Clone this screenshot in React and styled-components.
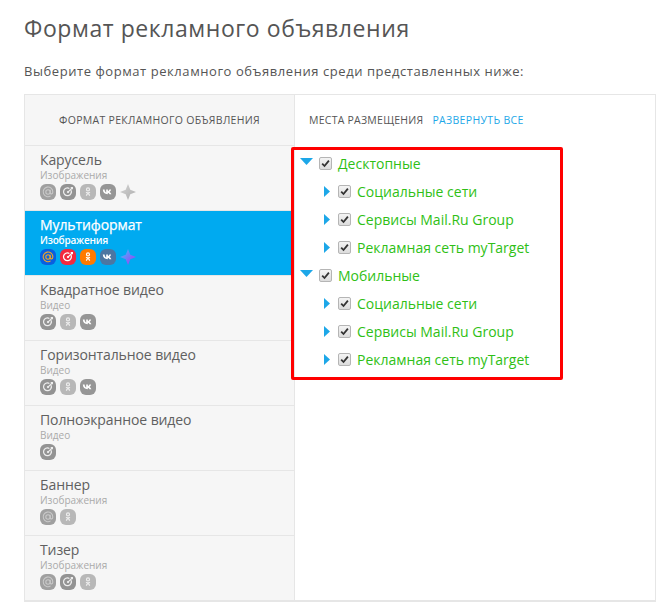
import React from "react";
import styled, { createGlobalStyle } from "styled-components";

const Global = createGlobalStyle`
  html, body { margin: 0; padding: 0; background: #fff; }
  body { font-family: "Open Sans", "Noto Sans", sans-serif; color: #555; }
`;
const Page = styled.div`
  width: 658px; height: 614px; box-sizing: border-box; padding: 14px 2px 0 24px; overflow: hidden;
`;
const Title = styled.h1`
  margin: 0; font-size: 23px; line-height: 28px; font-weight: 400; color: #555; letter-spacing: 0.57px;
`;
const Subtitle = styled.p`
  margin: 19px 0 0; font-size: 13px; line-height: 20px; color: #555; letter-spacing: 0.56px;
`;
const Table = styled.div`
  margin-top: 13px; display: grid; grid-template-columns: 270px 1fr; border: 1px solid #e6e6e6;
  border-bottom: 2px solid #e6e6e6; height: 505px; position: relative;
`;
const Left = styled.div`
  background: #f6f6f6; border-right: 1px solid #e6e6e6; display: flex; flex-direction: column;
`;
const LeftHead = styled.div`
  height: 50px; flex: none; display: flex; align-items: center; justify-content: center;
  border-bottom: 1px solid #e6e6e6; font-size: 10.5px; color: #555; letter-spacing: 0.3px;
`;
const Item = styled.div`
  height: 64px; flex: none; padding: 5px 0 0 15px; box-sizing: border-box; margin-bottom: ${p => (p.$last ? 0 : 1)}px;
  background: ${p => (p.$active ? "#00aaf0" : "transparent")};
  color: ${p => (p.$active ? "#fff" : "#606060")};
  box-shadow: ${p => (p.$last ? "none" : "0 1px 0 #e6e6e6")};
`;
const Name = styled.div`
  font-size: 14px; line-height: 18px; font-weight: 400; letter-spacing: -0.1px;
  -webkit-text-stroke: ${p => (p.$active ? "0.25px #fff" : "0")};
`;
const Sub = styled.div`
  font-size: 10px; line-height: 12px; color: ${p => (p.$active ? "#fff" : "#aaa")};
  font-weight: ${p => (p.$active ? 600 : 400)}; letter-spacing: ${p => (p.$active ? "-0.2px" : "0")};
`;
const Icons = styled.div`
  display: flex; gap: 4px; margin-top: 3px;
`;
const Right = styled.div`
  display: flex; flex-direction: column; min-width: 0;
`;
const RightHead = styled.div`
  height: 50px; display: flex; align-items: center; padding-left: 14px; gap: 9px; font-size: 10.5px; box-sizing: border-box;
  padding-bottom: 1px; letter-spacing: 0.25px;
`;
const Expand = styled.span`
  color: #1da7e8; letter-spacing: 0.32px;
`;
const Tree = styled.div`
  display: flex; flex-direction: column; padding-top: 4px;
`;
const Row = styled.div`
  height: 28px; display: flex; align-items: center; padding-left: ${p => (p.$child ? 29 : 5)}px;
  color: #2fbf16; font-size: 14px;
`;
const Label = styled.span`
  margin-left: 6px;
`;
const Box = styled.span`
  width: 11px; height: 11px; border: 1px solid #b5b5b5; border-radius: 2px; background: linear-gradient(#f4f4f4, #dcdcdc);
  display: flex; align-items: center; justify-content: center; margin-left: ${p => (p.$child ? 8 : 6)}px; flex: none;
`;
const Highlight = styled.div`
  position: absolute; left: 266px; top: 52px; width: 266px; height: 227px; border: 3px solid #f00; border-radius: 2px; pointer-events: none;
`;

const Check = () => (
  <svg width="9" height="9" viewBox="0 0 9 9"><path d="M1.2 4.6 3.5 7 7.9 1.6" fill="none" stroke="#333" strokeWidth="1.8" /></svg>
);
const Down = () => (
  <svg width="13" height="7" viewBox="0 0 13 7" style={{ flex: "none", marginBottom: 3 }}><path d="M0 0h13L6.5 7z" fill="#1da7e8" /></svg>
);
const RightTri = () => (
  <svg width="6" height="11" viewBox="0 0 6 11" style={{ flex: "none", marginTop: 1 }}><path d="M0 0l6 5.5L0 11z" fill="#1da7e8" /></svg>
);

const palette = {
  mail: ["#0a5fe0", "#f5a623"],
  target: ["#f2293f", "#fff"],
  ok: ["#ff7a00", "#fff"],
  vk: ["#4d76a1", "#fff"],
};
const grey = { mail: ["#a0a0a0", "#c9c9c9"], target: ["#939393", "#eee"], ok: ["#b8b8b8", "#eee"], vk: ["#969696", "#fff"] };

const Glyph = ({ kind, c }) => {
  if (kind === "mail") return <g fill="none" stroke={c} strokeWidth="1.1"><circle cx="8" cy="8" r="2.2" /><path d="M10.2 5.8v3c0 1.8 2.6 1.4 2.6-.9a4.8 4.8 0 1 0-2.2 4" /></g>;
  if (kind === "target") return <g fill="none" stroke={c} strokeWidth="1.2"><path d="M10.8 5.8A3.9 3.9 0 1 1 9.4 4.4" /><circle cx="8" cy="8.1" r="1.1" fill={c} stroke="none" /><path d="M8 8.1l4-4M10.7 3.6h1.7v1.7" /></g>;
  if (kind === "ok") return <g fill="none" stroke={c} strokeWidth="1.2"><circle cx="8" cy="5.4" r="1.5" /><path d="M6 8.2c1.3.8 2.7.8 4 0M8 8.8 6.3 11.6M8 8.8l1.7 2.8" /></g>;
  return <path d="M2.8 5.6h1.8c.1 1.9 1 2.7 1.6 2.9V5.6h1.7v1.6c.6-.1 1.3-.8 1.5-1.6h1.7c-.2 1.1-1 1.9-1.6 2.3.6.3 1.5 1 1.9 2.4h-1.9c-.3-.9-1-1.5-1.7-1.6v1.6h-.2C4.8 10.3 2.9 8.5 2.8 5.6z" fill={c} />;
};
const Badge = ({ kind, active }) => {
  const [bg, c] = (active ? palette : grey)[kind];
  return (
    <svg width="16" height="16" viewBox="0 0 16 16" style={{ flex: "none" }}>
      <rect width="16" height="16" rx="6" fill={bg} />
      <Glyph kind={kind} c={c} />
    </svg>
  );
};
const Star = ({ active }) => (
  <svg width="16" height="16" viewBox="0 0 16 16" style={{ flex: "none" }}>
    <defs>
      <linearGradient id="starActive" x1="0" y1="0" x2="1" y2="1"><stop offset="0" stopColor="#35c8ff" /><stop offset="1" stopColor="#b02cf0" /></linearGradient>
      <linearGradient id="starGrey" x1="0" y1="0" x2="1" y2="1"><stop offset="0" stopColor="#d4d4d4" /><stop offset="1" stopColor="#adadad" /></linearGradient>
    </defs>
    <path d="M8 0 10.3 5.7 16 8 10.3 10.3 8 16 5.7 10.3 0 8 5.7 5.7z" fill={active ? "url(#starActive)" : "url(#starGrey)"} />
  </svg>
);

const items = [
  { name: "Карусель", sub: "Изображения", icons: ["mail", "target", "ok", "vk", "star"] },
  { name: "Мультиформат", sub: "Изображения", icons: ["mail", "target", "ok", "vk", "star"], active: true },
  { name: "Квадратное видео", sub: "Видео", icons: ["target", "ok", "vk"] },
  { name: "Горизонтальное видео", sub: "Видео", icons: ["target", "ok", "vk"] },
  { name: "Полноэкранное видео", sub: "Видео", icons: ["target"] },
  { name: "Баннер", sub: "Изображения", icons: ["mail", "ok"] },
  { name: "Тизер", sub: "Изображения", icons: ["mail", "target", "ok"], last: true },
];
const children = ["Социальные сети", "Сервисы Mail.Ru Group", "Рекламная сеть myTarget"];

const Group = ({ label }) => (
  <>
    <Row><Down /><Box><Check /></Box><Label>{label}</Label></Row>
    {children.map(c => (
      <Row key={c} $child><RightTri /><Box $child><Check /></Box><Label>{c}</Label></Row>
    ))}
  </>
);

export default function App() {
  return (
    <Page>
      <Global />
      <Title>Формат рекламного объявления</Title>
      <Subtitle>Выберите формат рекламного объявления среди представленных ниже:</Subtitle>
      <Table>
        <Left>
          <LeftHead>ФОРМАТ РЕКЛАМНОГО ОБЪЯВЛЕНИЯ</LeftHead>
          {items.map(it => (
            <Item key={it.name} $active={it.active} $last={it.last}>
              <Name $active={it.active}>{it.name}</Name>
              <Sub $active={it.active}>{it.sub}</Sub>
              <Icons>
                {it.icons.map(k => (k === "star" ? <Star key={k} active={it.active} /> : <Badge key={k} kind={k} active={it.active} />))}
              </Icons>
            </Item>
          ))}
        </Left>
        <Right>
          <RightHead>МЕСТА РАЗМЕЩЕНИЯ <Expand>РАЗВЕРНУТЬ ВСЕ</Expand></RightHead>
          <Tree>
            <Group label="Десктопные" />
            <Group label="Мобильные" />
          </Tree>
        </Right>
        <Highlight />
      </Table>
    </Page>
  );
}
